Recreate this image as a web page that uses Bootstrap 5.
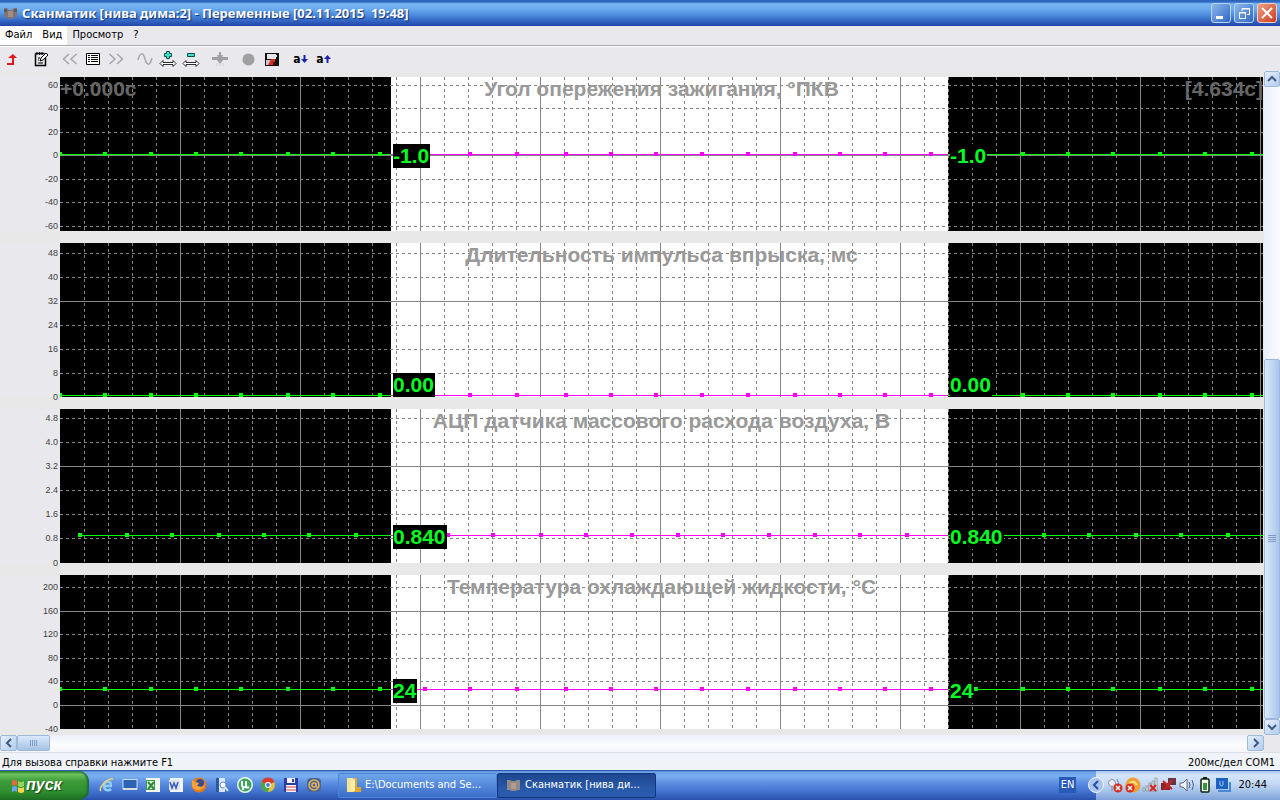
<!DOCTYPE html>
<html lang="ru">
<head>
<meta charset="utf-8">
<meta name="viewport" content="width=device-width, initial-scale=1">
<title>Сканматик - Переменные</title>
<link href="https://cdn.jsdelivr.net/npm/bootstrap@5.3.0/dist/css/bootstrap.min.css" rel="stylesheet">
<style>
  body { font: 11px/16px "DejaVu Sans Condensed", "DejaVu Sans", sans-serif; color: #000; background: #e9e8ed; }
  button { font: inherit; border: 0; padding: 0; background: none; color: inherit; }
  svg { display: block; flex: none; }

  .win-title { height: 26px; padding: 0 3px; background: linear-gradient(#2a62b8 0, #2f6cc8 8%, #7ab4f2 14%, #6aaaf0 35%, #4a88dc 60%, #2f5dbd 85%, #2347a4 100%); color: #fff; }
  .win-title h1 { font: bold 13px/26px "Noto Sans", "DejaVu Sans Condensed", sans-serif; white-space: pre; text-shadow: 1px 1px 1px #0d2f78; }
  .win-btns { gap: 3px; }
  .win-btn { width: 20px; height: 20px; border: 1px solid #b9d3f5; border-radius: 3px; background: linear-gradient(135deg, #8db9ee, #2f66c4); }
  .win-btn.close-btn { background: linear-gradient(135deg, #f0a184, #cb3c1c); border-color: #f3cfc6; }

  .menu-row { height: 20px; border-bottom: 1px solid #a7a6aa; }
  .menu-row a { color: #000; text-decoration: none; padding: 0 5px; line-height: 18px; }
  .menu-row a.lit { background: #fff; }
  .tool-row { height: 25px; border-top: 1px solid #fff; gap: 6px; }
  .tool-row button { width: 23px; height: 24px; display: flex; align-items: center; justify-content: center; }
  .tool-row .tool-text { font: bold 12px/16px "DejaVu Sans Condensed", "DejaVu Sans", sans-serif; }

  .plots { padding: 6px 1px 6px 0; gap: 12px; background: #e8e8e9; }
  .plot { height: 154px; }
  .axis { width: 60px; height: 154px; background: #e9e8ed; overflow: visible; font: 9px "Liberation Sans", Arial, sans-serif; }
  .trace { width: 0; height: 154px; flex: 1 1 0; }
  .trace text { font: bold 21px "Liberation Sans", Arial, sans-serif; }

  .sb-v { width: 16px; background: linear-gradient(90deg, #e8eefb, #fbfcff); }
  .sb-h { height: 17px; background: linear-gradient(#eef0fb, #fcfdff 60%, #f4f6fc); }
  .sb-btn, .sb-thumb { border: 1px solid #9fb8dc; border-radius: 2px; background: linear-gradient(135deg, #e4effd, #b3cdec); display: flex; align-items: center; justify-content: center; }
  .sb-v .sb-btn { width: 16px; height: 16px; }
  .sb-h .sb-btn { width: 17px; height: 16px; }
  .sb-v .sb-thumb { width: 16px; height: 360px; background: linear-gradient(90deg, #dbe9fb, #a9c5ea); }
  .sb-h .sb-thumb { width: 33px; height: 16px; background: linear-gradient(#dbe9fb, #a4c2e6); }
  .sb-corner { width: 16px; background: #e9e8ed; }

  .status-row { height: 18px; padding: 2px 5px 0 2px; background: #f0f3f8; border-top: 1px solid #dcdfe6; }

  .taskbar { height: 30px; color: #fff; background: linear-gradient(#1c4390 0, #6ba2ea 6%, #7ab0f0 20%, #5a8ce0 45%, #4274cf 70%, #2a52ae 100%); }
  .start-btn { width: 89px; height: 29px; padding-left: 11px; border-radius: 0 10px 10px 0; background: linear-gradient(#2f8a2f 0, #6cc15c 12%, #3c9c38 35%, #2f9030 70%, #1d6e20 100%); box-shadow: inset -2px 0 2px #1e6a3a; font: italic bold 16px/28px "Liberation Sans", Arial, sans-serif; text-shadow: 1px 1px 1px #144414; }
  .quick { gap: 7px; width: 249px; padding-left: 10px; }
  .quick button { width: 16px; height: 16px; }
  .task-btn { width: 159px; height: 25px; padding: 0 8px; border-radius: 2px; font-size: 11px; border: 1px solid #4a83d8; background: linear-gradient(#6fa6ec, #3a6cc8); white-space: nowrap; }
  .task-btn.current { border-color: #14357c; background: linear-gradient(#1d468f, #2858a8 60%, #2a5bb0); }
  .lang { width: 17px; height: 16px; margin-right: 20px; background: #2a5ab8; text-align: center; }
  .tray { height: 29px; width: 184px; padding-right: 13px; color: #000; background: linear-gradient(#a9c6ee 0, #d5e5f9 15%, #c2d8f4 45%, #a5c2ea 70%, #7fa2da 100%); }
  .tray svg { margin-left: -8px; }
</style>
</head>
<body>
<div class="d-flex flex-column min-vh-100">

  <header class="win-title d-flex align-items-center">
    <svg width="15" height="16" viewBox="0 0 15 16"><path d="M1 3h3l2 2h3l2-2h3v9h-3l-1 2H5l-1-2H1z" fill="#7b7674"/><path d="M5 6h5v6H5z" fill="#a08c84"/><path d="M1 4h3v3H1zM11 4h3v3h-3z" fill="#5d5a58"/></svg>
    <h1 class="m-0 ms-1 flex-grow-1">Сканматик [нива дима:2] - Переменные [02.11.2015  19:48]</h1>
    <div class="win-btns d-flex">
      <button class="win-btn" aria-label="Свернуть"><svg width="18" height="18"><path d="M4 12h7v3H4z" fill="#fff"/></svg></button>
      <button class="win-btn" aria-label="Восстановить"><svg width="18" height="18" fill="none" stroke="#fff"><path d="M7 7V4.500h7.500v6H12M7 5h8"/><path d="M4.500 8.500h6v6h-6zM4 9h7"/></svg></button>
      <button class="win-btn close-btn" aria-label="Закрыть"><svg width="18" height="18"><path d="M4 4l10 10M14 4L4 14" stroke="#fff" stroke-width="2"/></svg></button>
    </div>
  </header>

  <nav class="menu-row d-flex">
    <a class="lit" href="#">Файл</a><a class="lit" href="#">Вид</a><a href="#">Просмотр</a><a href="#">?</a>
  </nav>

  <div class="tool-row d-flex" role="toolbar">
    <div class="d-flex"><button aria-label="Вверх"><svg width="14" height="14"><path d="M2 12h6V5" fill="none" stroke="#e01818" stroke-width="2"/><path d="M3 6l5-4 4 4z" fill="#e01818"/></svg></button></div>
    <div class="d-flex"><button aria-label="Заметки"><svg width="16" height="16" fill="none" stroke="#000"><path d="M2.500 2.500h9M12.500 7v7.500h-10v-12" stroke-width="1.500"/><path d="M4 1v3M6.500 1v3M9 1v3M5 7h2M5 9h1M5 12h5"/><path d="M7 10l1-3 5-5 2 2-5 5z" fill="#fff"/></svg></button></div>
    <div class="d-flex">
      <button aria-label="Назад"><svg width="16" height="12" fill="none" stroke="#a5a5aa" stroke-width="1.500"><path d="M7 1L1.500 6 7 11M14.500 1L9 6l5.500 5"/></svg></button>
      <button aria-label="Список"><svg width="14" height="12"><path d="M.5.500h13v11H.5z" fill="#fff" stroke="#000"/><path d="M2 2.500h2M2 4.500h2M2 6.500h2M2 8.500h2M5 2.500h7M5 4.500h7M5 6.500h7M5 8.500h7" stroke="#000"/></svg></button>
      <button aria-label="Вперёд"><svg width="16" height="12" fill="none" stroke="#a5a5aa" stroke-width="1.500"><path d="M1.500 1L7 6l-5.500 5M9 1l5.500 5L9 11"/></svg></button>
    </div>
    <div class="d-flex">
      <button aria-label="График"><svg width="16" height="14" fill="none" stroke="#a5a5aa" stroke-width="1.500"><path d="M1 8C3 0 6 0 8 7s5 7 7-1"/></svg></button>
      <button aria-label="Увеличить"><svg width="18" height="18"><path d="M7.500 1.500h3v2h2v3h-2v2h-3v-2h-2v-3h2z" fill="#3fe0cc" stroke="#084c44"/><path d="M1 13.500l3-3v2h10v-2l3 3-3 3v-2H4v2z" fill="#fff" stroke="#000" stroke-width=".8"/></svg></button>
      <button aria-label="Уменьшить"><svg width="18" height="18"><path d="M5.500 3.500h7v3h-7z" fill="#3fe0cc" stroke="#084c44"/><path d="M1 13.500l3-3v2h10v-2l3 3-3 3v-2H4v2z" fill="#fff" stroke="#000" stroke-width=".8"/></svg></button>
    </div>
    <div class="d-flex"><button aria-label="Маркер"><svg width="18" height="16" fill="#a0a0a4"><path d="M1 6h16v3H1zM8 1h2v3h2l-1 3 1 2-3 4-3-4 1-2-1-3h2z"/><path d="M6 12v3M9 12v3M12 12v3" stroke="#d0d0d4"/></svg></button></div>
    <div class="d-flex">
      <button aria-label="Запись"><svg width="13" height="13"><circle cx="6.500" cy="6.500" r="6" fill="#a0a0a2"/></svg></button>
      <button aria-label="Сохранить"><svg width="14" height="13"><path d="M0 0h14v13H0z" fill="#111"/><path d="M2 1h9v5H2z" fill="#e6e6ea"/><path d="M11 2h1v2h-1z" fill="#e6e6ea"/><path d="M1 7h9v5H1z" fill="#c8c8cc"/><path d="M3 12l3-6h4v6z" fill="#d83020"/><path d="M8 9h3v3H8z" fill="#400c08"/></svg></button>
    </div>
    <div class="d-flex">
      <button class="tool-text">a<svg width="7" height="10"><path d="M2.500 1h2v4H7L3.500 9 0 5h2.500z" fill="#2020b0"/></svg></button>
      <button class="tool-text">a<svg width="7" height="10"><path d="M2.500 9h2V5H7L3.500 1 0 5h2.500z" fill="#2020b0"/></svg></button>
    </div>
  </div>

  <main class="d-flex flex-grow-1">
    <div class="plots d-flex flex-column flex-grow-1" id="plots"></div>
    <div class="sb-v d-flex flex-column">
      <button class="sb-btn" aria-label="Вверх"><svg width="10" height="8" fill="none" stroke="#3f5a86" stroke-width="2"><path d="M1 6l4-4 4 4"/></svg></button>
      <div class="sb-thumb mt-auto"><svg width="8" height="8"><path d="M0 .5h8M0 2.500h8M0 4.500h8M0 6.500h8" stroke="#7d9cc8"/></svg></div>
      <button class="sb-btn" aria-label="Вниз"><svg width="10" height="8" fill="none" stroke="#3f5a86" stroke-width="2"><path d="M1 2l4 4 4-4"/></svg></button>
    </div>
  </main>

  <div class="d-flex">
    <div class="sb-h d-flex flex-grow-1">
      <button class="sb-btn" aria-label="Влево"><svg width="8" height="10" fill="none" stroke="#3f5a86" stroke-width="2"><path d="M6 1L2 5l4 4"/></svg></button>
      <div class="sb-thumb"><svg width="8" height="8"><path d="M.5 1v6M2.500 1v6M4.500 1v6M6.500 1v6" stroke="#7d9cc8"/></svg></div>
      <button class="sb-btn ms-auto" aria-label="Вправо"><svg width="8" height="10" fill="none" stroke="#3f5a86" stroke-width="2"><path d="M2 1l4 4-4 4"/></svg></button>
    </div>
    <div class="sb-corner"></div>
  </div>

  <div class="status-row d-flex justify-content-between"><span>Для вызова справки нажмите F1</span><span>200мс/дел COM1</span></div>

  <footer class="taskbar d-flex align-items-center">
    <button class="start-btn d-flex align-items-center">
      <svg width="15" height="17"><path d="M1 4q3-2 5 0v5q-2-2-5 0z" fill="#e8683a"/><path d="M7 4q3 2 6 0v5q-3 2-6 0z" fill="#9bd35a"/><path d="M1 10q3-2 5 0v5q-2-2-5 0z" fill="#6aa6f0"/><path d="M7 10q3 2 6 0v5q-3 2-6 0z" fill="#f7d64a"/></svg>пуск</button>
    <div class="quick d-flex align-items-center">
      <button aria-label="Internet Explorer"><svg width="16" height="16" fill="none"><path d="M13 9H5c0 5 5 5 7 3M5 8c1-5 7-4 7 0" stroke="#8fd0fa" stroke-width="2.500"/><path d="M2 14C-1 11 8 1 14 2" stroke="#f0d070" stroke-width="1.500"/></svg></button>
      <button aria-label="Рабочий стол"><svg width="16" height="16"><path d="M1 2.500h14v10H1z" fill="#2b62b4" stroke="#c8dcf4"/><path d="M1 11h14v2H1z" fill="#d8dce0"/></svg></button>
      <button aria-label="Excel"><svg width="16" height="16"><path d="M1 1h14v14H1z" fill="#f2f8ee"/><path d="M1 3h9v10H1z" fill="#3c9a48"/><path d="M2 4h7v8H2z" fill="#e4f4e0"/><path d="M3 5l6 7M9 5l-6 7" stroke="#2c8a3c" stroke-width="2"/></svg></button>
      <button aria-label="Word"><svg width="16" height="16"><path d="M2 1h13v14H2z" fill="#f2f4fc"/><path d="M1 3h11v10H1z" fill="#dfe6f8"/><path d="M2 5l2 6 2-5 2 5 2-6" fill="none" stroke="#3a5cb8" stroke-width="1.500"/></svg></button>
      <button aria-label="Firefox"><svg width="16" height="16"><circle cx="8" cy="8" r="7.500" fill="#e8781c"/><circle cx="9" cy="6" r="4" fill="#3a4c8c"/><path d="M1 3l3 2 4 1-2 3 5 1 3-3c0 6-10 9-13 2z" fill="#f6a43a"/></svg></button>
      <button aria-label="Поиск"><svg width="16" height="16"><path d="M2 1h9v14H2z" fill="#d8e6f8"/><path d="M2 1h3v14H2z" fill="#2c58a8"/><circle cx="9" cy="8" r="3" fill="#f4faff" stroke="#6a8cc0"/><path d="M11 10l3 4" stroke="#dce8f8" stroke-width="2"/></svg></button>
      <button aria-label="uTorrent"><svg width="16" height="16"><circle cx="8" cy="8" r="8" fill="#e8f8ea"/><circle cx="8" cy="8" r="6.500" fill="#3ba45a"/><path d="M5 4v4q0 3 4 2V4M9 10q1 1 3 0M6 10v3" fill="none" stroke="#fff" stroke-width="2"/></svg></button>
      <button aria-label="Chrome"><svg width="16" height="16"><circle cx="8" cy="8" r="7" fill="#e2c33a"/><path d="M1.500 5a7 7 0 0 1 13 0L8 8z" fill="#d8402c"/><path d="M1.500 5A7 7 0 0 0 8 15l2-6z" fill="#49a54c"/><circle cx="8" cy="8" r="3" fill="#fff"/><circle cx="8" cy="8" r="2" fill="#4a84d8"/></svg></button>
      <button aria-label="Total Commander"><svg width="16" height="16"><path d="M1 1h14v14H1z" fill="#2c3cae"/><path d="M4 1h8v5H4zM3 8h10v7H3z" fill="#f4f4fa"/><path d="M9 2h2v3H9z" fill="#2c3cae"/><path d="M3 10h10M3 13h10" stroke="#d84848"/></svg></button>
      <button aria-label="Почта"><svg width="16" height="16"><rect x="1" y="1" width="14" height="14" rx="4" fill="#47679c"/><circle cx="8" cy="8" r="5" fill="none" stroke="#e8b04a" stroke-width="1.500"/><circle cx="8" cy="8" r="2" fill="none" stroke="#e8b04a" stroke-width="1.500"/><path d="M10 6v4h3" fill="none" stroke="#e8b04a"/></svg></button>
    </div>
    <div class="d-flex flex-grow-1 align-items-center">
      <button class="task-btn d-flex align-items-center gap-1"><svg width="14" height="16"><path d="M0 1h6l2 2v12H0z" fill="#f8e48c"/><path d="M7 1h3v9h4v5H7z" fill="#e0a830"/><path d="M4 2h4v12H4z" fill="#fbeeb0"/></svg>E:\Documents and Se...</button>
      <button class="task-btn current d-flex align-items-center gap-1"><svg width="15" height="16" viewBox="0 0 15 16"><path d="M1 3h3l2 1h3l2-1h3v10h-3l-1 1H5l-1-1H1z" fill="#8f8a88"/><path d="M5 6h5v6H5z" fill="#b39a90"/></svg>Сканматик [нива ди...</button>
      <span class="lang ms-auto">EN</span>
    </div>
    <div class="tray d-flex align-items-center">
      <svg width="146" height="20">
        <circle cx="8" cy="10" r="7.500" fill="#a9c4ee" stroke="#eef5ff"/><path d="M10 6l-4 4 4 4" fill="none" stroke="#2a50a0" stroke-width="2"/>
        <circle cx="24" cy="8" r="3.500" fill="#e8ecf4" stroke="#8a94a8"/><path d="M24 12v4M29 4q3 4 0 8" stroke="#7a86a0" fill="none"/><circle cx="30" cy="13" r="4.500" fill="#d82c20"/><path d="M28 11l4 4M32 11l-4 4" stroke="#fff" stroke-width="1.500"/>
        <circle cx="45" cy="10" r="7.500" fill="#f0a030"/><path d="M41 9q4-5 8 1" stroke="#ffe08a" stroke-width="2" fill="none"/><circle cx="42" cy="13" r="4.500" fill="#d82c20"/><path d="M40 11l4 4M44 11l-4 4" stroke="#fff" stroke-width="1.500"/>
        <path d="M55 13h2v3h-2zM58 11h2v5h-2zM61 8h2v8h-2zM64 6h2v10h-2zM67 3h2v13h-2z" fill="#e6ece8" stroke="#6c7884" stroke-width=".6"/><path d="M62 10l6 6M68 10l-6 6" stroke="#d42828" stroke-width="2"/>
        <path d="M73 8h9v7h-9z" fill="#8c2626"/><path d="M80 3h8v7h-8z" fill="#6c3444"/><path d="M75 6l9 8M84 5l-7 9" stroke="#c82424" stroke-width="2"/>
        <path d="M92 8h3l4-4v12l-4-4h-3z" fill="#f0f4f8" stroke="#5c6a7c"/><path d="M101 7q2 3 0 6M104 5q3 5 0 10" fill="none" stroke="#4e607c"/>
        <rect x="113" y="4" width="8" height="13" rx="1" fill="#f4fff0" stroke="#102010" stroke-width="1.500"/><path d="M115 2h4v2h-4z" fill="#102010"/><path d="M115 8h4v7h-4z" fill="#2f9a3a"/>
        <path d="M128 3h12v11h-12z" fill="#1d62c0"/><path d="M130 16h12V7" stroke="#4a88d8" stroke-width="2" fill="none"/><path d="M132 6v4q2 2 3 0V6" stroke="#9cc8f4" fill="none"/>
      </svg>
      <time class="ms-auto">20:44</time>
    </div>
  </footer>
</div>

<script>
  // Sampled points are offsets in pixels from the start of the record; one small division is 24 px.
  const common = [0, 45, 91, 136, 181, 228, 273, 320, 410, 457, 506, 551, 596, 642, 688, 735, 780, 825, 871, 963, 1008, 1053, 1100, 1145, 1192];
  const airflow = [20, 67, 112, 159, 204, 249, 296, 388, 433, 481, 526, 572, 618, 663, 709, 755, 800, 847, 984, 1029, 1076, 1121, 1168];
  const charts = [
    { title: 'Угол опережения зажигания, °ПКВ', value: '-1.0', box: 37, top: 67, y: 77, points: common, solid: [78], start: '+0.000с', end: '[4.634с]',
      ticks: [[60, 8], [40, 31], [20, 55], [0, 78], [-20, 102], [-40, 125], [-60, 149]] },
    { title: 'Длительность импульса впрыска, мс', value: '0.00', box: 42, top: 130, y: 152, points: common, solid: [58],
      ticks: [[48, 10], [40, 34], [32, 58], [24, 82], [16, 106], [8, 130], [0, 154]] },
    { title: 'АЦП датчика массового расхода воздуха, В', value: '0.840', box: 54, top: 116, y: 126, points: airflow, solid: [57],
      ticks: [['4.8', 9], ['4.0', 33], ['3.2', 57], ['2.4', 81], ['1.6', 105], ['0.8', 129], ['0', 154]] },
    { title: 'Температура охлаждающей жидкости, °С', value: '24', box: 24, top: 104, y: 114, points: common.concat([365, 916]), solid: [36, 130],
      ticks: [[200, 12], [160, 36], [120, 59], [80, 83], [40, 106], [0, 130], [-40, 154]] }
  ];
  const selStart = 331, selEnd = 888;
  const green = '#00ff00', magenta = '#ff00ff';
  const gridLine = (x1, y1, x2, y2, dash) =>
    `<line x1="${x1}" y1="${y1}" x2="${x2}" y2="${y2}" stroke="#858585"${dash ? ' stroke-dasharray="3 3"' : ''} shape-rendering="crispEdges"/>`;
  const bar = (x, y, w, fill) => `<rect x="${x}" y="${y}" width="${w}" height="1" fill="${fill}"/>`;

  document.getElementById('plots').innerHTML = charts.map(c => {
    const axis = c.ticks.map(([t, y]) => `<text x="58" y="${y + 3}" text-anchor="end" fill="#404040">${t}</text>`).join('');
    let g = `<rect width="100%" height="154" fill="#000"/><rect x="${selStart}" width="${selEnd - selStart}" height="154" fill="#fff"/>`;
    for (let x = 24; x < 3840; x += 24) g += gridLine(x + .5, 0, x + .5, 154, x % 120);
    for (const [, y] of c.ticks) if (y < 154) g += gridLine(0, y + .5, '100%', y + .5, !c.solid.includes(y));
    g += `<text x="50%" y="19" text-anchor="middle" fill="#999">${c.title}</text>`;
    if (c.start) g += `<text x="0" y="19" fill="#666">${c.start}</text><text x="100%" y="19" text-anchor="end" fill="#666">${c.end}</text>`;
    g += bar(selEnd, c.y, '100%', green) + bar(c.points[0], c.y, selStart - c.points[0], green) + bar(selStart, c.y, selEnd - selStart, magenta);
    for (const x of c.points) g += `<rect x="${x - 2}" y="${c.y - 2}" width="4" height="4" fill="${x > selStart && x < selEnd ? magenta : green}"/>`;
    for (const x of [selStart + 2, selEnd + 2])
      g += `<rect x="${x}" y="${c.top}" width="${c.box}" height="24" fill="#000"/><text x="${x}" y="${c.top + 19}" fill="#0f2">${c.value}</text>`;
    return `<div class="plot d-flex"><svg class="axis">${axis}</svg><svg class="trace">${g}</svg></div>`;
  }).join('');
</script>
<script src="https://cdn.jsdelivr.net/npm/bootstrap@5.3.0/dist/js/bootstrap.bundle.min.js"></script>
</body>
</html>
